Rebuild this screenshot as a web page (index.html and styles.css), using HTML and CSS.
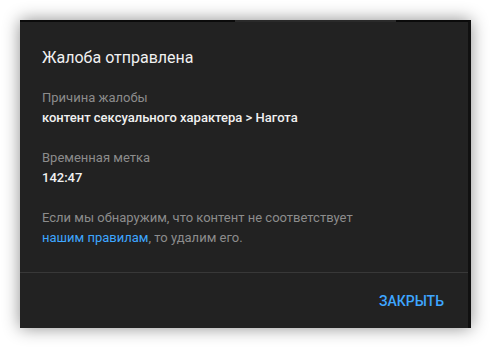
FILE: index.html
```html
<!DOCTYPE html>
<html lang="ru">
<head>
  <meta charset="UTF-8" />
  <meta name="viewport" content="width=device-width, initial-scale=1.0"/>
  <title>Жалоба отправлена</title>
  <link rel="stylesheet" href="styles.css">
</head>
<body>
  <div class="dialog">
    <div class="dialog-body">
      <h2 class="dialog-title">Жалоба отправлена</h2>

      <div class="field">
        <p class="field-label">Причина жалобы</p>
        <p class="field-value">контент сексуального характера &gt; Нагота</p>
      </div>

      <div class="field">
        <p class="field-label">Временная метка</p>
        <p class="field-value">142:47</p>
      </div>

      <p class="note">Если мы обнаружим, что контент не соответствует<br><a href="#">нашим правилам</a>, то удалим его.</p>
    </div>

    <!-- Buttons -->
    <div class="dialog-footer">
      <button class="close-btn">Закрыть</button>
    </div>
  </div>
</body>
</html>
```

FILE: styles.css
```css
* {
  margin: 0;
  padding: 0;
  box-sizing: border-box;
  font-family: Roboto, "Noto Sans", sans-serif;
}

body {
  background: #ffffff;
  padding: 20px;
}

.dialog {
  position: relative;
  width: 451px;
  height: 308px;
  background: #222222;
  border-top: 2px solid #0b0b0b;
  border-right: 3px solid #101010;
  box-shadow: 0 0 16px rgba(0, 0, 0, 0.45);
  display: flex;
  flex-direction: column;
}

/* lighter part of the top edge */
.dialog::before {
  content: "";
  position: absolute;
  top: -2px;
  left: 215px;
  width: 161px;
  height: 2px;
  background: #2a2a2a;
}

.dialog-body {
  padding: 24px 24px 24px 22px;
  border-bottom: 1px solid #383838;
}

.dialog-title {
  font-size: 16px;
  font-weight: 400;
  line-height: 24px;
  color: #f1f1f1;
  margin-bottom: 18px;
}

.field {
  margin-bottom: 20px;
}

.field-label,
.note {
  font-size: 13px;
  line-height: 20px;
  color: #8c8c8c;
}

.field-value {
  font-size: 13px;
  line-height: 20px;
  font-weight: 500;
  color: #f1f1f1;
}

.note a {
  color: #3ea6ff;
  text-decoration: none;
}

.dialog-footer {
  flex: 1;
  display: flex;
  align-items: center;
  justify-content: flex-end;
  padding: 0 24px;
}

.close-btn {
  background: none;
  border: none;
  color: #3ea6ff;
  font-size: 14px;
  font-weight: 500;
  text-transform: uppercase;
  cursor: pointer;
}
```
